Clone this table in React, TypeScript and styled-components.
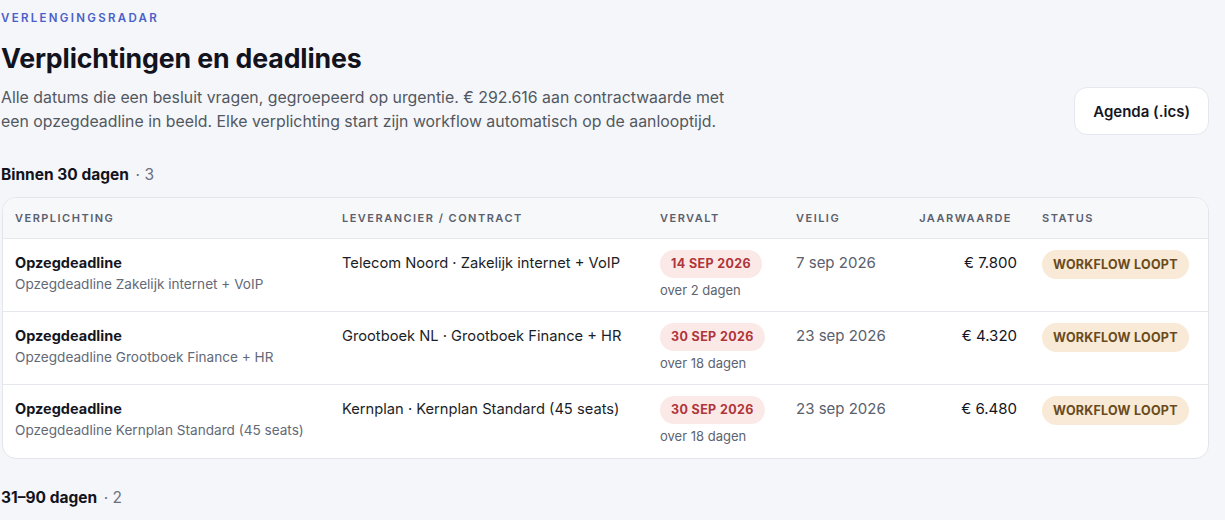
import React from "react";
import styled, { createGlobalStyle } from "styled-components";

type Row = {
  title: string;
  subtitle: string;
  vendor: string;
  due: string;
  dueIn: string;
  safe: string;
  value: string;
  status: string;
};

const rows: Row[] = [
  {
    title: "Opzegdeadline",
    subtitle: "Opzegdeadline Zakelijk internet + VoIP",
    vendor: "Telecom Noord · Zakelijk internet + VoIP",
    due: "14 SEP 2026",
    dueIn: "over 2 dagen",
    safe: "7 sep 2026",
    value: "€ 7.800",
    status: "WORKFLOW LOOPT",
  },
  {
    title: "Opzegdeadline",
    subtitle: "Opzegdeadline Grootboek Finance + HR",
    vendor: "Grootboek NL · Grootboek Finance + HR",
    due: "30 SEP 2026",
    dueIn: "over 18 dagen",
    safe: "23 sep 2026",
    value: "€ 4.320",
    status: "WORKFLOW LOOPT",
  },
  {
    title: "Opzegdeadline",
    subtitle: "Opzegdeadline Kernplan Standard (45 seats)",
    vendor: "Kernplan · Kernplan Standard (45 seats)",
    due: "30 SEP 2026",
    dueIn: "over 18 dagen",
    safe: "23 sep 2026",
    value: "€ 6.480",
    status: "WORKFLOW LOOPT",
  },
];

const App = () => {
  return (
    <>
      <GlobalStyle />
      <Page>
        <Eyebrow>Verlengingsradar</Eyebrow>
        <HeaderRow>
          <div>
            <Title>Verplichtingen en deadlines</Title>
            <Lead>
              Alle datums die een besluit vragen, gegroepeerd op urgentie. € 292.616 aan
              contractwaarde met een opzegdeadline in beeld. Elke verplichting start zijn
              workflow automatisch op de aanlooptijd.
            </Lead>
          </div>
          <GhostButton>Agenda (.ics)</GhostButton>
        </HeaderRow>

        <GroupTitle>
          Binnen 30 dagen <Count>· 3</Count>
        </GroupTitle>
        <Card>
          <HeadRow>
            <HeadCell>Verplichting</HeadCell>
            <HeadCell>Leverancier / contract</HeadCell>
            <HeadCell>Vervalt</HeadCell>
            <HeadCell>Veilig</HeadCell>
            <HeadCell $right>Jaarwaarde</HeadCell>
            <HeadCell>Status</HeadCell>
          </HeadRow>
          {rows.map((r, i) => (
            <BodyRow key={i}>
              <Cell>
                <RowTitle>{r.title}</RowTitle>
                <RowSub>{r.subtitle}</RowSub>
              </Cell>
              <Cell>
                <Vendor>{r.vendor}</Vendor>
              </Cell>
              <Cell $tight>
                <DuePill>{r.due}</DuePill>
                <DueIn>{r.dueIn}</DueIn>
              </Cell>
              <Cell>
                <Muted>{r.safe}</Muted>
              </Cell>
              <Cell $right>
                <Amount>{r.value}</Amount>
              </Cell>
              <Cell $tight>
                <StatusPill>{r.status}</StatusPill>
              </Cell>
            </BodyRow>
          ))}
        </Card>

        <GroupTitle $gap>
          31–90 dagen <Count>· 2</Count>
        </GroupTitle>
      </Page>
    </>
  );
};

export default App;

const GlobalStyle = createGlobalStyle`
  body {
    margin: 0;
    background: #f5f6fa;
    font-family: Inter, "Noto Sans", sans-serif;
    color: #14161f;
  }
`;

const Page = styled.div`
  padding: 11px 16px 0 1px;
  height: 520px;
  box-sizing: border-box;
  overflow: hidden;
`;

const Eyebrow = styled.div`
  font-size: 11.5px;
  font-weight: 600;
  letter-spacing: 0.2em;
  text-transform: uppercase;
  color: #4a60c8;
  line-height: 14px;
`;

const HeaderRow = styled.div`
  display: flex;
  justify-content: space-between;
  align-items: flex-end;
`;

const Title = styled.h1`
  margin: 16px 0 0;
  font-size: 26.7px;
  line-height: 34px;
  font-weight: 700;
  letter-spacing: -0.005em;
  color: #12131d;
`;

const Lead = styled.p`
  margin: 11px 0 0;
  max-width: 745px;
  font-size: 15.85px;
  line-height: 24px;
  color: #52585f;
`;

const GhostButton = styled.button`
  height: 48px;
  padding: 0 18px;
  margin-bottom: -1px;
  background: #ffffff;
  border: 1px solid #e5e7ee;
  border-radius: 13px;
  font-family: Inter, sans-serif;
  font-size: 15px;
  font-weight: 600;
  color: #14161f;
  cursor: pointer;
`;

const GroupTitle = styled.h3<{ $gap?: boolean }>`
  margin: ${(p) => (p.$gap ? "29px" : "31px")} 0 12px;
  font-size: 15.5px;
  line-height: 20px;
  font-weight: 700;
  color: #12131d;
`;

const Count = styled.span`
  margin-left: 3px;
  font-weight: 400;
  color: #6b7080;
`;

const Card = styled.div`
  margin-left: 1px;
  background: #ffffff;
  border: 1px solid #e3e5eb;
  border-radius: 14px;
  overflow: hidden;
`;

const grid = `
  display: grid;
  grid-template-columns: 327px 318px 136px 120px 126px 1fr;
`;

const HeadRow = styled.div`
  ${grid}
  height: 40px;
  align-items: center;
  background: #f7f8fa;
  border-bottom: 1px solid #e6e8ee;
`;

const HeadCell = styled.div<{ $right?: boolean }>`
  padding: 0 ${(p) => (p.$right ? "18px" : "13px")} 0 12px;
  font-size: 11px;
  font-weight: 600;
  letter-spacing: 0.135em;
  text-transform: uppercase;
  color: #5a606e;
  text-align: ${(p) => (p.$right ? "right" : "left")};
`;

const BodyRow = styled.div`
  ${grid}
  height: 73px;
  box-sizing: border-box;
  border-bottom: 1px solid #e6e8ee;
  &:last-child {
    border-bottom: none;
  }
`;

const Cell = styled.div<{ $right?: boolean; $tight?: boolean }>`
  padding: ${(p) => (p.$tight ? "11px" : "14px")} 13px 0 12px;
  text-align: ${(p) => (p.$right ? "right" : "left")};
  display: flex;
  flex-direction: column;
  align-items: ${(p) => (p.$right ? "flex-end" : "flex-start")};
`;

const RowTitle = styled.div`
  font-size: 14.5px;
  line-height: 20px;
  font-weight: 700;
  color: #14161f;
`;

const RowSub = styled.div`
  margin-top: 2px;
  font-size: 13.6px;
  line-height: 18px;
  color: #636977;
`;

const Vendor = styled.div`
  font-size: 14.7px;
  line-height: 20px;
  color: #1c1e27;
`;

const DuePill = styled.span`
  display: inline-block;
  padding: 0 11px;
  height: 28px;
  line-height: 28px;
  border-radius: 14px;
  background: #fbe9e8;
  color: #b0353a;
  font-size: 12.5px;
  font-weight: 700;
  letter-spacing: 0.03em;
`;

const DueIn = styled.div`
  margin-top: 3px;
  font-size: 13px;
  line-height: 18px;
  color: #5d6370;
`;

const Muted = styled.div`
  font-size: 15px;
  line-height: 20px;
  color: #5a606c;
`;

const Amount = styled.div`
  font-size: 15px;
  line-height: 20px;
  color: #14161f;
`;

const StatusPill = styled.span`
  display: inline-block;
  padding: 0 11px;
  height: 29px;
  line-height: 29px;
  border-radius: 15px;
  background: #f8ead6;
  color: #6a4a1d;
  font-size: 12.5px;
  font-weight: 700;
  letter-spacing: 0.02em;
`;
